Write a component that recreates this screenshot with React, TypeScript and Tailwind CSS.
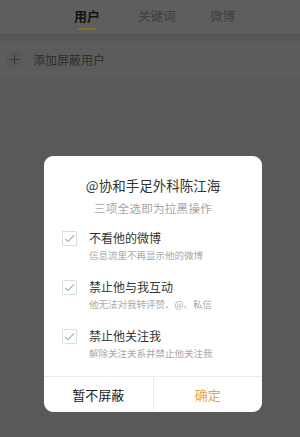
import React from "react";

const items = [
  { label: "不看他的微博", desc: "信息流里不再显示他的微博" },
  { label: "禁止他与我互动", desc: "他无法对我转评赞、@、私信" },
  { label: "禁止他关注我", desc: "解除关注关系并禁止他关注我" },
];

function Check() {
  return (
    <div className="w-[15px] h-[15px] border border-[#dcdcdc] rounded-[1px] flex items-center justify-center shrink-0">
      <svg width="11" height="9" viewBox="0 0 11 9" fill="none">
        <path d="M1 4.8 L4 7.6 L10 1.4" stroke="#7cbf86" strokeWidth="1.1" />
      </svg>
    </div>
  );
}

export default function App() {
  return (
    <div
      className="relative w-[300px] h-[437px] overflow-hidden bg-[#595959]"
      style={{ fontFamily: '"Noto Sans CJK SC", "Noto Sans", sans-serif' }}
    >
      {/* tab bar */}
      <div className="h-[33px] bg-[#5e5e5e] flex items-start">
        <div className="absolute left-[74px] top-[7px] flex flex-col items-center">
          <span className="text-[13px] leading-[18px] font-bold text-[#141414]">用户</span>
          <div className="mt-[3px] w-[19px] h-[2px] bg-[#8a6d25]" />
        </div>
        <span className="absolute left-[138px] top-[7px] text-[12.5px] leading-[18px] text-[#3e3e3e]">关键词</span>
        <span className="absolute left-[210px] top-[7px] text-[12.5px] leading-[18px] text-[#3e3e3e]">微博</span>
      </div>
      <div className="h-[8px] bg-[#575757]" />
      <div className="h-[37px] bg-[#5c5c5c] flex items-center pl-[6px]">
        <div className="w-[17px] h-[17px] rounded-full bg-[#585858] flex items-center justify-center">
          <svg width="11" height="11" viewBox="0 0 11 11">
            <path d="M5.5 0.5 V10.5 M0.5 5.5 H10.5" stroke="#3a3a3a" strokeWidth="1.2" />
          </svg>
        </div>
        <span className="ml-[10px] text-[12px] text-[#2e2e2e]">添加屏蔽用户</span>
      </div>

      {/* dialog */}
      <div className="absolute left-[44px] top-[156px] w-[218px] h-[256px] bg-white rounded-[9px] overflow-hidden flex flex-col">
        <div className="pt-[19px] flex flex-col items-center">
          <div className="text-[13.5px] leading-[20px] text-[#333]">@协和手足外科陈江海</div>
          <div className="mt-[5px] text-[11.5px] leading-[16px] text-[#a6a6a6] tracking-[0.3px]">三项全选即为拉黑操作</div>
        </div>
        <div className="flex flex-col pl-[18px] mt-[12px] gap-[15px]">
          {items.map((it) => (
            <div key={it.label} className="flex flex-col">
              <div className="flex items-center h-[20px]">
                <Check />
                <span className="ml-[12px] text-[12px] leading-[20px] text-[#333]">{it.label}</span>
              </div>
              <div className="ml-[27px] text-[9.5px] leading-[14px] text-[#a8a8a8]">{it.desc}</div>
            </div>
          ))}
        </div>
        <div className="mt-auto h-[36px] border-t border-[#ececec] flex">
          <div className="flex-1 flex items-center justify-center text-[13px] text-[#222] border-r border-[#ececec]">暂不屏蔽</div>
          <div className="flex-1 flex items-center justify-center text-[13px] text-[#e5a445]">确定</div>
        </div>
      </div>
    </div>
  );
}
